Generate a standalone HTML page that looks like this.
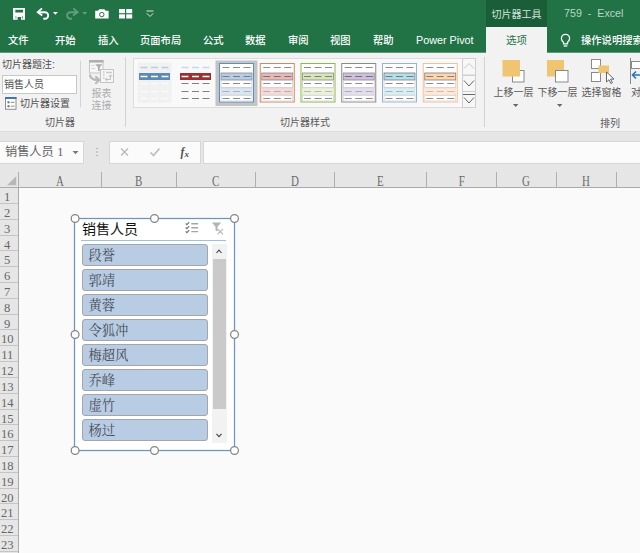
<!DOCTYPE html>
<html lang="zh-CN">
<head>
<meta charset="utf-8">
<title>Excel</title>
<style>
html,body{margin:0;padding:0;}
body{width:640px;height:553px;overflow:hidden;position:relative;background:#fafafa;
  font-family:"Liberation Sans","Noto Sans CJK SC",sans-serif;font-size:10px;color:#444;}
.abs{position:absolute;}
#title{left:0;top:0;width:640px;height:52px;background:#217346;}
.tab{position:absolute;top:27.500px;height:25px;line-height:25px;color:#fff;font-size:10.300px;white-space:nowrap;font-weight:500;}
#ctx{left:486px;top:0;width:61px;height:27px;background:#1a5e39;color:#d4e4da;font-size:10px;line-height:29px;text-align:center;white-space:nowrap;}
#seltab{left:486px;top:27px;width:61px;height:26px;background:#f2f2f2;color:#217346;font-size:10.5px;line-height:27px;text-align:center;}
#apptitle{left:564px;top:0;height:27px;line-height:27px;color:#b9d6c5;font-size:10.700px;white-space:nowrap;}
#ribbon{left:0;top:52px;width:640px;height:79px;background:#f2f2f2;border-bottom:1px solid #dcdcdc;}
#strip1{left:0;top:132px;width:640px;height:9px;background:#e6e6e6;}
#fbar{left:0;top:141px;width:640px;height:23px;background:#e6e6e6;}
#strip2{left:0;top:164px;width:640px;height:8px;background:#e6e6e6;}
.lbl{position:absolute;white-space:nowrap;font-size:10px;color:#505050;line-height:12px;}
.glbl{position:absolute;white-space:nowrap;font-size:10px;color:#5a5a5a;line-height:12px;text-align:center;}
.vsep{position:absolute;width:1px;background:#d2d2d2;}
#colhdr{left:0;top:172px;width:640px;height:15px;background:#e6e6e6;border-bottom:1px solid #ababab;}
.ch{position:absolute;top:0;height:15px;border-right:1px solid #b0b0b0;box-sizing:border-box;text-align:center;}
.ch span{display:inline-block;font-family:"Liberation Serif","Noto Serif CJK SC",serif;font-size:14px;color:#6c6c6c;line-height:16.300px;transform:scaleX(0.780);position:relative;top:1.500px;}
#rowhdr{left:0;top:188px;width:18px;height:365px;background:#e6e6e6;border-right:1px solid #ababab;}
.rh{position:absolute;left:0;width:18px;height:15.81px;border-bottom:1px solid #c4c4c4;box-sizing:border-box;}
.rh span{position:absolute;left:-3.400px;width:20.500px;top:0;text-align:center;font-family:"Liberation Serif","Noto Serif CJK SC",serif;font-size:13px;color:#666;line-height:17px;transform:scaleX(0.970);}
#slicer{left:75px;top:219px;width:159px;height:231px;background:#fff;}
.hd{position:absolute;width:8px;height:8px;border:1px solid #7a7a7a;border-radius:50%;background:#fff;box-sizing:border-box;}
.item{position:absolute;left:82px;width:126px;height:22px;background:#b8cce4;border:1px solid #a6a6a6;border-radius:3px;box-sizing:border-box;
  font-family:"Liberation Serif","Noto Serif CJK SC",serif;font-size:13.300px;color:#474d55;line-height:21.400px;padding-left:5.500px;}
</style>
</head>
<body>
<!-- title + tabs -->
<div id="title" class="abs"></div>
<div id="ctx" class="abs">切片器工具</div>
<div id="apptitle" class="abs">759&nbsp; -&nbsp; Excel</div>
<div class="tab" style="left:8px">文件</div>
<div class="tab" style="left:55px">开始</div>
<div class="tab" style="left:98px">插入</div>
<div class="tab" style="left:140px">页面布局</div>
<div class="tab" style="left:203px">公式</div>
<div class="tab" style="left:245px">数据</div>
<div class="tab" style="left:288px">审阅</div>
<div class="tab" style="left:330px">视图</div>
<div class="tab" style="left:373px">帮助</div>
<div class="tab" style="left:416px;font-size:10.800px;">Power Pivot</div>
<div id="seltab" class="abs">选项</div>
<div class="tab" style="left:581px;font-weight:500">操作说明搜索</div>
<svg class="abs" style="left:0;top:0" width="640" height="52" viewBox="0 0 640 52">
  <!-- save -->
  <path fill-rule="evenodd" fill="#fff" d="M13.100 8.100h11.900v11.700h-11.900z M15.300 9.800v2.700h7.700v-2.700z M17.600 16.900v2.900h3.400v-2.900z M15.600 16.200v2.400h0.700v-2.400z M22.200 16.200v2.400h0.700v-2.400z"/>
  <!-- undo -->
  <path d="M38.300 12.200h6.600a3.300 3.300 0 0 1 0 6.600h-1.600" fill="none" stroke="#fff" stroke-width="1.900"/>
  <path d="M42 8.300l-4.300 3.900l4.600 3.200" fill="none" stroke="#fff" stroke-width="1.800"/>
  <path d="M52.900 12h5l-2.500 2.800z" fill="#fff"/>
  <!-- redo -->
  <g opacity="0.300">
  <path d="M77 12.200h-6.600a3.300 3.300 0 0 0 0 6.600h1.600" fill="none" stroke="#fff" stroke-width="1.900"/>
  <path d="M73.300 8.300l4.300 3.900l-4.600 3.200" fill="none" stroke="#fff" stroke-width="1.800"/>
  <path d="M82.200 12h5l-2.500 2.800z" fill="#fff"/>
  </g>
  <!-- camera -->
  <path d="M95.200 10.800h2.800l1.200-1.600h5.200l1.200 1.600h3v7.800h-13.400z" fill="#fff"/>
  <circle cx="101.800" cy="14.600" r="2.200" fill="none" stroke="#217346" stroke-width="1"/>
  <!-- grid icon -->
  <g fill="#fff">
    <rect x="119" y="9" width="6" height="4.200"/><rect x="126.200" y="9" width="6" height="4.200"/>
    <rect x="119" y="14.300" width="6" height="4.200"/><rect x="126.200" y="14.300" width="6" height="4.200"/>
  </g>
  <!-- qat dropdown -->
  <path d="M146.500 11h7" stroke="#d5e6db" stroke-width="1"/>
  <path d="M146.800 13.300l3.200 3.200l3.200-3.200" fill="none" stroke="#d5e6db" stroke-width="1"/>
  <!-- bulb -->
  <g fill="none" stroke="#fff" stroke-width="1.300">
    <path d="M563.500 43.800v-1.600c-1.400-1.100-2.100-2.300-2.100-3.800a4.100 4.100 0 0 1 8.200 0c0 1.500-.7 2.700-2.100 3.800v1.600z"/>
    <path d="M563.700 46h3.600"/>
  </g>
</svg>

<!-- ribbon -->
<div id="ribbon" class="abs"></div>
<div class="abs" style="left:0;top:52px;width:486px;height:1px;background:#5f987a;"></div>
<div class="abs" style="left:547px;top:52px;width:93px;height:1px;background:#5f987a;"></div>
<div class="lbl" style="left:2px;top:59px;">切片器题注:</div>
<div class="abs" style="left:2px;top:75px;width:75px;height:19px;background:#fff;border:1px solid #c8c8c8;box-sizing:border-box;"></div>
<div class="lbl" style="left:4px;top:79px;">销售人员</div>
<div class="lbl" style="left:20px;top:98px;">切片器设置</div>
<svg class="abs" style="left:4px;top:96px" width="14" height="15" viewBox="4 96 14 15">
  <rect x="5.500" y="97.500" width="10.500" height="11.800" fill="#fff" stroke="#8e8e8e" stroke-width="1"/>
  <rect x="5" y="97" width="11.500" height="2" fill="#3f74b8"/>
  <rect x="7.500" y="101.300" width="2" height="2" fill="#6a6a6a"/><rect x="10.800" y="101.800" width="3.700" height="1" fill="#8a8a8a"/>
  <rect x="7.500" y="105.200" width="2" height="2" fill="#6a6a6a"/><rect x="10.800" y="105.700" width="3.700" height="1" fill="#8a8a8a"/>
</svg>
<div class="glbl" style="left:30px;top:117px;width:60px;">切片器</div>
<div class="vsep" style="left:80px;top:61px;height:46px;"></div>
<div class="lbl" style="left:91.5px;top:87.5px;color:#adadad;line-height:12px;">报表<br>连接</div>
<svg class="abs" style="left:86px;top:57px" width="32" height="28" viewBox="86 57 32 28">
  <rect x="89.500" y="60.500" width="13.500" height="12.500" fill="#f6f6f6" stroke="#c4c4c4"/>
  <rect x="89" y="60" width="14.500" height="2.600" fill="#b0b0b0"/>
  <path d="M95.300 64.200h7.200l-2.700 3v3.800h-1.800v-3.800z" fill="#adadad"/>
  <path d="M91.500 65.500h3M91.500 68.500h4" stroke="#d6d6d6" stroke-width="1.200"/>
  <rect x="100.500" y="69.500" width="13" height="13" fill="#f6f6f6" stroke="#c4c4c4"/>
  <path d="M103 72h1.600M103 75h1.600M103 78h1.600M106 72.500h6" stroke="#c9c9c9" stroke-width="1.300"/>
  <path d="M105.500 79.500h5v-4.500M108.800 76.800l1.700-1.900l1.700 1.900M107.300 77.800l-1.900 1.700l1.900 1.700" fill="none" stroke="#c0c0c0" stroke-width="1"/>
  <path d="M90 74.500c0 4.300 3 5.500 8 5.500" fill="none" stroke="#b8b8b8" stroke-width="2.300"/>
  <path d="M95.300 76.300l4.300 3.700l-4.300 3.700" fill="none" stroke="#b8b8b8" stroke-width="1.800"/>
</svg>
<div class="vsep" style="left:125px;top:57px;height:70px;"></div>

<!-- gallery -->
<div class="abs" style="left:133px;top:58px;width:343px;height:50px;background:#f9f9f9;border:1px solid #dcdcdc;box-sizing:border-box;"></div>
<svg class="abs" style="left:133px;top:58px" width="346" height="50" viewBox="133 58 346 50">
  <!-- thumb 1 -->
  <rect x="137.500" y="62.500" width="34" height="40.500" fill="#f1f1f1"/>
  <path d="M140.500 67.500h28" fill="none" stroke-dasharray="7 3.500" stroke="#b9cde5" stroke-width="1.500"/>
  <rect x="139" y="73" width="31" height="7" fill="#5b8ab5"/>
  <path d="M140.500 76.500h28" fill="none" stroke-dasharray="7 3.500" stroke="#fff" stroke-width="1.500"/>
  <path d="M140.500 83.500h28" fill="none" stroke-dasharray="7 3.500" stroke="#fafafa" stroke-width="1.500"/>
  <path d="M140.500 91.500h28" fill="none" stroke-dasharray="7 3.500" stroke="#fafafa" stroke-width="1.500"/>
  <path d="M140.500 98.500h28" fill="none" stroke-dasharray="7 3.500" stroke="#fafafa" stroke-width="1.500"/>
  <!-- thumb 2 -->
  <path d="M181.500 67.500h28" fill="none" stroke-dasharray="7 3.500" stroke="#c5d9ec" stroke-width="1.500"/>
  <rect x="180" y="73" width="31" height="7" fill="#9c2f2f"/>
  <path d="M181.500 76.500h28" fill="none" stroke-dasharray="7 3.500" stroke="#fff" stroke-width="1.500"/>
  <path d="M181.500 83.500h28" fill="none" stroke-dasharray="7 3.500" stroke="#808080" stroke-width="1.200"/>
  <path d="M181.500 91.500h28" fill="none" stroke-dasharray="7 3.500" stroke="#808080" stroke-width="1.200"/>
  <path d="M181.500 98.500h28" fill="none" stroke-dasharray="7 3.500" stroke="#808080" stroke-width="1.200"/>
  <!-- thumb 3 selected -->
  <rect x="215.500" y="60.500" width="42" height="45.500" fill="#c4c4c4"/>
  <g id="t3">
    <rect x="219.500" y="63.500" width="34" height="38.500" fill="#fff" stroke="#5b8fc9" stroke-width="1"/>
    <rect x="221" y="73" width="31" height="7" fill="#b8cce4" stroke="#8a8a8a" stroke-width="0.800"/>
    <rect x="221" y="80.500" width="31" height="7" fill="#fff" stroke="#c8c8c8" stroke-width="0.800"/>
    <rect x="221" y="88" width="31" height="7" fill="#dce6f1" stroke="#c9d6e6" stroke-width="0.800"/>
    <rect x="221" y="95.500" width="31" height="5.500" fill="#fff" stroke="#d4d4d4" stroke-width="0.800"/>
    <path d="M222.500 67.500h28" fill="none" stroke-dasharray="7 3.500" stroke="#8c8c8c" stroke-width="1.200"/>
    <path d="M222.500 76.500h28" fill="none" stroke-dasharray="7 3.500" stroke="#6f7f92" stroke-width="1.200"/>
    <path d="M222.500 83.500h28" fill="none" stroke-dasharray="7 3.500" stroke="#8c8c8c" stroke-width="1.200"/>
    <path d="M222.500 91.500h28" fill="none" stroke-dasharray="7 3.500" stroke="#a8b4c4" stroke-width="1.200"/>
    <path d="M222.500 98.500h28" fill="none" stroke-dasharray="7 3.500" stroke="#8c8c8c" stroke-width="1.200"/>
  </g>
  <!-- thumb 4 red -->
  <g transform="translate(40.750 0)">
    <rect x="219.500" y="63.500" width="34" height="38.500" fill="#fff" stroke="#d08a60" stroke-width="1"/>
    <rect x="221" y="73" width="31" height="7" fill="#e6b8b7" stroke="#8a8a8a" stroke-width="0.800"/>
    <rect x="221" y="80.500" width="31" height="7" fill="#fff" stroke="#c8c8c8" stroke-width="0.800"/>
    <rect x="221" y="88" width="31" height="7" fill="#f2dcdb" stroke="#e6cfce" stroke-width="0.800"/>
    <rect x="221" y="95.500" width="31" height="5.500" fill="#fff" stroke="#d4d4d4" stroke-width="0.800"/>
    <path d="M222.500 67.500h28" fill="none" stroke-dasharray="7 3.500" stroke="#8c8c8c" stroke-width="1.200"/>
    <path d="M222.500 76.500h28" fill="none" stroke-dasharray="7 3.500" stroke="#8a6a6a" stroke-width="1.200"/>
    <path d="M222.500 83.500h28" fill="none" stroke-dasharray="7 3.500" stroke="#8c8c8c" stroke-width="1.200"/>
    <path d="M222.500 91.500h28" fill="none" stroke-dasharray="7 3.500" stroke="#c4a8a8" stroke-width="1.200"/>
    <path d="M222.500 98.500h28" fill="none" stroke-dasharray="7 3.500" stroke="#8c8c8c" stroke-width="1.200"/>
  </g>
  <!-- thumb 5 green -->
  <g transform="translate(81.500 0)">
    <rect x="219.500" y="63.500" width="34" height="38.500" fill="#fff" stroke="#8fb750" stroke-width="1"/>
    <rect x="221" y="73" width="31" height="7" fill="#d8e4bc" stroke="#8a8a8a" stroke-width="0.800"/>
    <rect x="221" y="80.500" width="31" height="7" fill="#fff" stroke="#c8c8c8" stroke-width="0.800"/>
    <rect x="221" y="88" width="31" height="7" fill="#ebf1de" stroke="#dfe6cf" stroke-width="0.800"/>
    <rect x="221" y="95.500" width="31" height="5.500" fill="#fff" stroke="#d4d4d4" stroke-width="0.800"/>
    <path d="M222.500 67.500h28" fill="none" stroke-dasharray="7 3.500" stroke="#8c8c8c" stroke-width="1.200"/>
    <path d="M222.500 76.500h28" fill="none" stroke-dasharray="7 3.500" stroke="#7c8468" stroke-width="1.200"/>
    <path d="M222.500 83.500h28" fill="none" stroke-dasharray="7 3.500" stroke="#8c8c8c" stroke-width="1.200"/>
    <path d="M222.500 91.500h28" fill="none" stroke-dasharray="7 3.500" stroke="#b4bca4" stroke-width="1.200"/>
    <path d="M222.500 98.500h28" fill="none" stroke-dasharray="7 3.500" stroke="#8c8c8c" stroke-width="1.200"/>
  </g>
  <!-- thumb 6 purple -->
  <g transform="translate(122.250 0)">
    <rect x="219.500" y="63.500" width="34" height="38.500" fill="#fff" stroke="#8a8a8a" stroke-width="1"/>
    <rect x="221" y="73" width="31" height="7" fill="#ccc0da" stroke="#8a8a8a" stroke-width="0.800"/>
    <rect x="221" y="80.500" width="31" height="7" fill="#fff" stroke="#c8c8c8" stroke-width="0.800"/>
    <rect x="221" y="88" width="31" height="7" fill="#e4dfec" stroke="#d8d2e2" stroke-width="0.800"/>
    <rect x="221" y="95.500" width="31" height="5.500" fill="#fff" stroke="#d4d4d4" stroke-width="0.800"/>
    <path d="M222.500 67.500h28" fill="none" stroke-dasharray="7 3.500" stroke="#8c8c8c" stroke-width="1.200"/>
    <path d="M222.500 76.500h28" fill="none" stroke-dasharray="7 3.500" stroke="#746a84" stroke-width="1.200"/>
    <path d="M222.500 83.500h28" fill="none" stroke-dasharray="7 3.500" stroke="#8c8c8c" stroke-width="1.200"/>
    <path d="M222.500 91.500h28" fill="none" stroke-dasharray="7 3.500" stroke="#b0a8bc" stroke-width="1.200"/>
    <path d="M222.500 98.500h28" fill="none" stroke-dasharray="7 3.500" stroke="#8c8c8c" stroke-width="1.200"/>
  </g>
  <!-- thumb 7 teal -->
  <g transform="translate(163 0)">
    <rect x="219.500" y="63.500" width="34" height="38.500" fill="#fff" stroke="#95b3d7" stroke-width="1"/>
    <rect x="221" y="73" width="31" height="7" fill="#b7dee8" stroke="#7a7a7a" stroke-width="0.800"/>
    <rect x="221" y="80.500" width="31" height="7" fill="#fff" stroke="#c8c8c8" stroke-width="0.800"/>
    <rect x="221" y="88" width="31" height="7" fill="#daeef3" stroke="#c8dfe6" stroke-width="0.800"/>
    <rect x="221" y="95.500" width="31" height="5.500" fill="#fff" stroke="#d4d4d4" stroke-width="0.800"/>
    <path d="M222.500 67.500h28" fill="none" stroke-dasharray="7 3.500" stroke="#8c8c8c" stroke-width="1.200"/>
    <path d="M222.500 76.500h28" fill="none" stroke-dasharray="7 3.500" stroke="#5e8490" stroke-width="1.200"/>
    <path d="M222.500 83.500h28" fill="none" stroke-dasharray="7 3.500" stroke="#8c8c8c" stroke-width="1.200"/>
    <path d="M222.500 91.500h28" fill="none" stroke-dasharray="7 3.500" stroke="#9cb8c0" stroke-width="1.200"/>
    <path d="M222.500 98.500h28" fill="none" stroke-dasharray="7 3.500" stroke="#8c8c8c" stroke-width="1.200"/>
  </g>
  <!-- thumb 8 orange -->
  <g transform="translate(203.750 0)">
    <rect x="219.500" y="63.500" width="34" height="38.500" fill="#fff" stroke="#fabf8f" stroke-width="1"/>
    <rect x="221" y="73" width="31" height="7" fill="#fcd5b4" stroke="#7a7a7a" stroke-width="0.800"/>
    <rect x="221" y="80.500" width="31" height="7" fill="#fff" stroke="#c8c8c8" stroke-width="0.800"/>
    <rect x="221" y="88" width="31" height="7" fill="#fde9d9" stroke="#f3dccb" stroke-width="0.800"/>
    <rect x="221" y="95.500" width="31" height="5.500" fill="#fff" stroke="#d4d4d4" stroke-width="0.800"/>
    <path d="M222.500 67.500h28" fill="none" stroke-dasharray="7 3.500" stroke="#8c8c8c" stroke-width="1.200"/>
    <path d="M222.500 76.500h28" fill="none" stroke-dasharray="7 3.500" stroke="#a07850" stroke-width="1.200"/>
    <path d="M222.500 83.500h28" fill="none" stroke-dasharray="7 3.500" stroke="#8c8c8c" stroke-width="1.200"/>
    <path d="M222.500 91.500h28" fill="none" stroke-dasharray="7 3.500" stroke="#d0b8a4" stroke-width="1.200"/>
    <path d="M222.500 98.500h28" fill="none" stroke-dasharray="7 3.500" stroke="#8c8c8c" stroke-width="1.200"/>
  </g>
  <!-- gallery scroll buttons -->
  <g fill="#f7f7f7" stroke="#cfcfcf" stroke-width="1">
    <rect x="462.500" y="58.500" width="13" height="16.500"/>
    <rect x="462.500" y="75.500" width="13" height="16"/>
    <rect x="462.500" y="91.500" width="13" height="16"/>
  </g>
  <path d="M464 68.500l5-5l5 5" fill="none" stroke="#c6c6c6" stroke-width="1"/>
  <path d="M464 80.500l5 5.500l5-5.500" fill="none" stroke="#666" stroke-width="1"/>
  <path d="M463 94.500h12" fill="none" stroke="#666" stroke-width="1"/>
  <path d="M464 97.500l5 5.500l5-5.500" fill="none" stroke="#666" stroke-width="1"/>
</svg>
<div class="glbl" style="left:265px;top:117px;width:80px;">切片器样式</div>
<div class="vsep" style="left:484px;top:57px;height:70px;"></div>

<!-- arrange -->
<svg class="abs" style="left:490px;top:55px" width="150" height="60" viewBox="490 55 150 60">
  <rect x="512.500" y="70.500" width="11.500" height="11.500" fill="#fff" stroke="#8a8a8a"/>
  <rect x="502.500" y="60" width="17.500" height="16.500" fill="#f0c571"/>
  <rect x="547" y="60" width="17" height="16.500" fill="#f0c571"/>
  <rect x="555.500" y="70.500" width="12.500" height="11.500" fill="#fff" stroke="#8a8a8a"/>
  <!-- selection pane -->
  <rect x="591.500" y="59.500" width="9" height="9" fill="#fff" stroke="#8a8a8a"/>
  <rect x="591.500" y="72.500" width="9" height="9" fill="#fff" stroke="#8a8a8a"/>
  <rect x="598.500" y="65.500" width="10.500" height="7.500" fill="#f0c571"/>
  <path d="M606.500 72v10l2.500-2.300l1.800 3.800l1.600-.8l-1.800-3.600h3.400z" fill="#fff" stroke="#555" stroke-width="0.900"/>
  <!-- align (cut off) -->
  <path d="M630.500 58v26" stroke="#8a8a8a"/>
  <rect x="631.500" y="61.500" width="12" height="7" fill="#fff" stroke="#8a8a8a"/>
  <path d="M640 75h-7M636 71.500l-3.500 3.500l3.500 3.500" fill="none" stroke="#2e75b6" stroke-width="1.600"/>
  <!-- dropdown arrows -->
  <path d="M513 104h5.400l-2.700 3z" fill="#666"/>
  <path d="M557 104h5.400l-2.700 3z" fill="#666"/>
</svg>
<div class="lbl" style="left:493.500px;top:87.300px;color:#5a5a5a;">上移一层</div>
<div class="lbl" style="left:537.500px;top:87.300px;color:#5a5a5a;">下移一层</div>
<div class="lbl" style="left:581.500px;top:87.300px;color:#5a5a5a;">选择窗格</div>
<div class="lbl" style="left:631px;top:87.300px;">对齐</div>
<div class="glbl" style="left:590px;top:117.500px;width:40px;">排列</div>

<!-- formula bar -->
<div id="strip1" class="abs"></div>
<div id="fbar" class="abs"></div>
<div id="strip2" class="abs"></div>
<div class="abs" style="left:-1px;top:141px;width:85px;height:23px;background:#fbfbfb;border:1px solid #d6d6d6;box-sizing:border-box;"></div>
<div class="abs" style="left:5px;top:141px;height:22px;line-height:22px;font-size:12.200px;color:#626262;white-space:nowrap;">销售人员 <span style="font-family:'Liberation Serif',serif">1</span></div>
<svg class="abs" style="left:70px;top:141px" width="140" height="22" viewBox="70 141 140 22">
  <path d="M72.500 151h6l-3 3.300z" fill="#777"/>
  <circle cx="97" cy="148.500" r="0.700" fill="#999"/><circle cx="97" cy="152" r="0.700" fill="#999"/><circle cx="97" cy="155.500" r="0.700" fill="#999"/>
</svg>
<div class="abs" style="left:109px;top:141px;width:92px;height:23px;background:#fbfbfb;border:1px solid #d6d6d6;box-sizing:border-box;"></div>
<div class="abs" style="left:203px;top:141px;width:438px;height:23px;background:#fbfbfb;border:1px solid #d6d6d6;box-sizing:border-box;"></div>
<svg class="abs" style="left:109px;top:141px" width="92" height="22" viewBox="109 141 92 22">
  <path d="M121 148.500l7 7M128 148.500l-7 7" stroke="#b8b8b8" stroke-width="1.200" fill="none"/>
  <path d="M150.500 152.500l3 3l6-7" stroke="#bdbdbd" stroke-width="1.600" fill="none"/>
  <text x="180.500" y="155.500" font-family="Liberation Serif, serif" font-style="italic" font-weight="bold" font-size="11.500" fill="#505050">f</text>
  <text x="184.500" y="156.500" font-family="Liberation Serif, serif" font-style="italic" font-weight="bold" font-size="9" fill="#505050">x</text>
</svg>

<!-- headers -->
<div id="colhdr" class="abs">
  <div class="ch" style="left:0;width:19px;"></div>
  <div class="ch" style="left:19px;width:83px;"><span>A</span></div>
  <div class="ch" style="left:102px;width:75px;"><span>B</span></div>
  <div class="ch" style="left:177px;width:79px;"><span>C</span></div>
  <div class="ch" style="left:256px;width:79px;"><span>D</span></div>
  <div class="ch" style="left:335px;width:92px;"><span>E</span></div>
  <div class="ch" style="left:427px;width:70px;"><span>F</span></div>
  <div class="ch" style="left:497px;width:60px;"><span>G</span></div>
  <div class="ch" style="left:557px;width:60px;"><span>H</span></div>
</div>
<svg class="abs" style="left:0;top:172px" width="19" height="16" viewBox="0 0 19 16"><path d="M16.200 4.300v8.900h-9.200z" fill="#b7b7b7"/></svg>
<div id="rowhdr" class="abs"></div>
<div id="rows">
<div class="rh" style="top:188.20px;"><span>1</span></div>
<div class="rh" style="top:204.01px;"><span>2</span></div>
<div class="rh" style="top:219.82px;"><span>3</span></div>
<div class="rh" style="top:235.63px;"><span>4</span></div>
<div class="rh" style="top:251.44px;"><span>5</span></div>
<div class="rh" style="top:267.25px;"><span>6</span></div>
<div class="rh" style="top:283.06px;"><span>7</span></div>
<div class="rh" style="top:298.87px;"><span>8</span></div>
<div class="rh" style="top:314.68px;"><span>9</span></div>
<div class="rh" style="top:330.49px;"><span>10</span></div>
<div class="rh" style="top:346.30px;"><span>11</span></div>
<div class="rh" style="top:362.11px;"><span>12</span></div>
<div class="rh" style="top:377.92px;"><span>13</span></div>
<div class="rh" style="top:393.73px;"><span>14</span></div>
<div class="rh" style="top:409.54px;"><span>15</span></div>
<div class="rh" style="top:425.35px;"><span>16</span></div>
<div class="rh" style="top:441.16px;"><span>17</span></div>
<div class="rh" style="top:456.97px;"><span>18</span></div>
<div class="rh" style="top:472.78px;"><span>19</span></div>
<div class="rh" style="top:488.59px;"><span>20</span></div>
<div class="rh" style="top:504.40px;"><span>21</span></div>
<div class="rh" style="top:520.21px;"><span>22</span></div>
<div class="rh" style="top:536.02px;"><span>23</span></div>
</div>

<!-- slicer -->
<div id="slicer" class="abs"></div>
<div class="abs" style="left:82px;top:220px;font-size:14px;line-height:18px;color:#111;white-space:nowrap;">销售人员</div>
<div class="abs" style="left:81px;top:240px;width:145px;height:1px;background:#9ec0e0;"></div>
<svg class="abs" style="left:180px;top:220px" width="50" height="18" viewBox="180 220 50 18">
  <path d="M191.300 223.700h6.800M191.300 227.700h6.800M191.300 231.600h6.800" stroke="#a6a6a6" stroke-width="1.400" fill="none"/>
  <path d="M185.700 223.500l1.200 1.200l2.300-2.500M185.700 227.500l1.200 1.200l2.300-2.500M185.700 231.400l1.200 1.200l2.300-2.500" stroke="#707070" stroke-width="1.100" fill="none"/>
  <path d="M211.800 222.500h9.400l-3.700 4.300v4.700l-2-1v-3.700z" fill="#b4b4b4"/>
  <path d="M217.500 228.800l5.500 5.500M223 228.800l-5.500 5.500" stroke="#b4b4b4" stroke-width="1.100"/>
</svg>
<div class="item" style="top:244px;">段誉</div>
<div class="item" style="top:269px;">郭靖</div>
<div class="item" style="top:294px;">黄蓉</div>
<div class="item" style="top:319px;">令狐冲</div>
<div class="item" style="top:344px;">梅超风</div>
<div class="item" style="top:369px;">乔峰</div>
<div class="item" style="top:394px;">虚竹</div>
<div class="item" style="top:419px;">杨过</div>
<!-- scrollbar -->
<div class="abs" style="left:212px;top:244px;width:14.500px;height:198.500px;background:#f2f2f2;"></div>
<div class="abs" style="left:213px;top:259px;width:12.5px;height:150px;background:#cacaca;"></div>
<svg class="abs" style="left:212px;top:244px" width="14" height="198" viewBox="0 0 14 198">
  <path d="M4.500 9l2.500-2.800l2.500 2.800" fill="none" stroke="#444" stroke-width="1.100"/>
  <path d="M4.500 189.800l2.500 2.800l2.500-2.800" fill="none" stroke="#444" stroke-width="1.100"/>
</svg>
<!-- frame + handles -->
<svg class="abs" style="left:66px;top:210px" width="178" height="250" viewBox="66 210 178 250">
  <rect x="74.500" y="218.500" width="160" height="232" fill="none" stroke="#6c96bf" stroke-width="1.250"/>
  <g fill="#fff" stroke="#858585" stroke-width="1.250">
    <circle cx="75.100" cy="218.500" r="3.900"/><circle cx="154.500" cy="218.500" r="3.900"/><circle cx="234.500" cy="218.500" r="3.900"/>
    <circle cx="75.100" cy="334.500" r="3.900"/><circle cx="234.500" cy="334.500" r="3.900"/>
    <circle cx="75.100" cy="450.500" r="3.900"/><circle cx="154.500" cy="450.500" r="3.900"/><circle cx="234.500" cy="450.500" r="3.900"/>
  </g>
</svg>
</body>
</html>
